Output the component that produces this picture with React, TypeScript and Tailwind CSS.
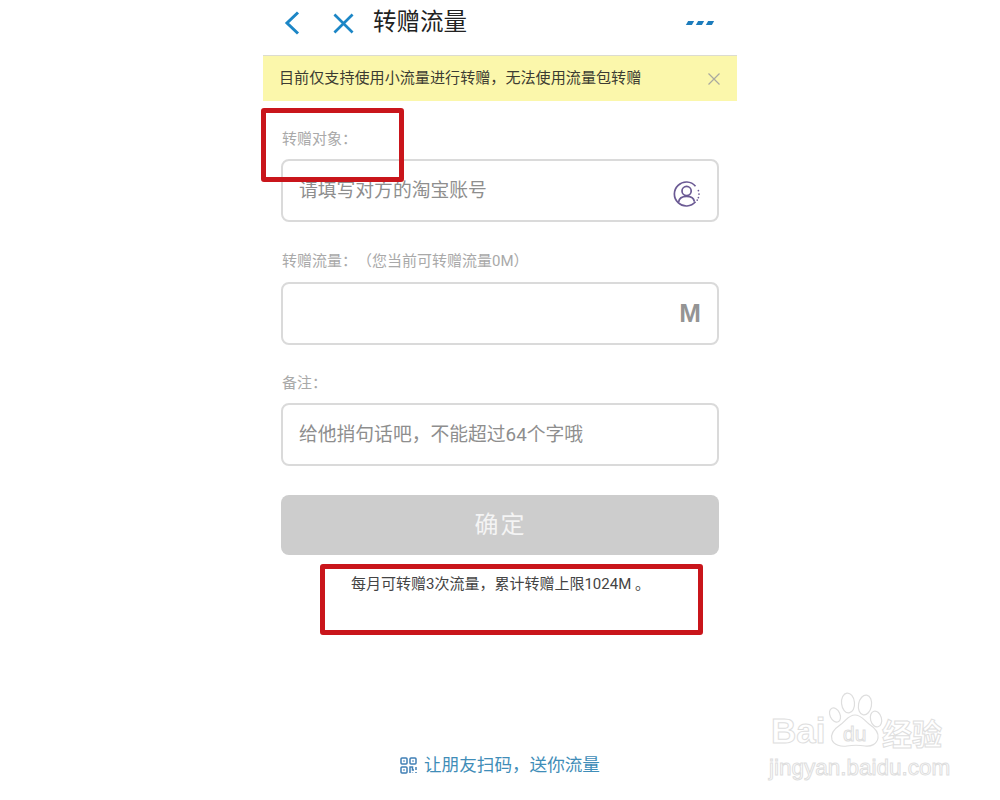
import React from 'react';

const FONT = "font-['Roboto','Noto_Sans_CJK_SC',sans-serif] [text-spacing-trim:space-all]";
const HOLLOW = 'text-transparent [-webkit-text-stroke:1px_#dedede]';

const Field: React.FC<{ label: string; children?: React.ReactNode; placeholder?: string; className?: string }> = ({
  label,
  children,
  placeholder,
  className,
}) => (
  <div className={className}>
    <div className="h-[22px] pl-px text-[15px] leading-[22px] text-[#a9a9a9]">{label}</div>
    <div className="mt-[9px] flex h-[63px] items-center justify-between rounded-[8px] border-2 border-[#dadada] pl-4 pr-4">
      <span className="pt-[2px] text-[18.8px] text-[#8e8e8e]">{placeholder}</span>
      {children}
    </div>
  </div>
);

const UserIcon = () => (
  <svg width="28" height="28" viewBox="0 0 28 28" fill="none" stroke="#6b5a94" strokeWidth="1.7" className="mt-[7px]">
    <path d="M22.5 6.2A12 12 0 1 0 22.5 21.8" />
    <path d="M25.4 10.5v.1M26 14v.1M25.4 17.5v.1M24.2 20v.1" strokeLinecap="round" />
    <circle cx="13.6" cy="11" r="4.6" />
    <path d="M5.6 22c.6-3.8 3.6-5.6 8-5.6s7.2 1.8 7.8 5.2" />
  </svg>
);

const QrIcon = () => (
  <svg width="17" height="17" viewBox="0 0 17 17" fill="none" stroke="#3f7fb5" strokeWidth="1.5">
    <rect x="1" y="1" width="6" height="6" rx="1" />
    <rect x="10" y="1" width="6" height="6" rx="1" />
    <rect x="1" y="10" width="6" height="6" rx="1" />
    <path d="M10 16v-6h2.5v3h1.5M16 10v3M12.5 16v-.5M16 16v-1" />
    <path d="M3 4h2M12 4h2M3 13h2" strokeWidth="1" />
  </svg>
);

const Watermark = () => (
  <div className="absolute left-[760px] top-[685px] h-[100px] w-[195px]">
    <svg width="56" height="58" viewBox="0 0 56 58" fill="none" stroke="#dedede" strokeWidth="1.2" className="absolute left-[68px] top-[6px]">
      <ellipse cx="20" cy="12" rx="6.5" ry="10" transform="rotate(-6 20 12)" />
      <ellipse cx="37" cy="14" rx="6.5" ry="10" transform="rotate(10 37 14)" />
      <ellipse cx="7" cy="24" rx="5" ry="7.5" transform="rotate(-25 7 24)" />
      <ellipse cx="48" cy="28" rx="5.5" ry="8" transform="rotate(-15 48 28)" />
      <path d="M27 24c6 0 9 5 14 9 6 4 10 8 9 14-1 6-7 9-13 8-6-1-12-1-18 0-6 1-13-1-15-6-2-6 2-11 8-15 6-4 8-10 15-10z" />
    </svg>
    <div className={`absolute left-[11px] top-[26px] font-['Liberation_Sans',sans-serif] text-[35px] leading-[40px] font-bold ${HOLLOW}`}>
      Bai
    </div>
    <div className={`absolute left-[83px] top-[37px] font-['Liberation_Sans',sans-serif] text-[21px] leading-[24px] ${HOLLOW}`}>
      du
    </div>
    <div className={`absolute left-[122px] top-[33px] text-[30px] leading-[34px] font-bold whitespace-nowrap ${HOLLOW}`}>经验</div>
    <div className={`absolute left-[9px] top-[70px] font-['Liberation_Sans',sans-serif] text-[22.5px] leading-[26px] whitespace-nowrap ${HOLLOW}`}>
      jingyan.baidu.com
    </div>
  </div>
);

export default function App() {
  return (
    <div className={`relative h-[800px] w-[1000px] overflow-hidden bg-white ${FONT}`}>
      <div className="mx-auto flex h-full w-[474px] flex-col">
        {/* Header */}
        <div className="flex h-[56px] shrink-0 items-center border-b border-[#dcdcd0] pb-[9px]">
          <svg width="16" height="24" viewBox="0 0 16 24" fill="none" stroke="#1c86c6" strokeWidth="3" className="ml-[21px]">
            <path d="M14 1.5 3 12l11 10.5" />
          </svg>
          <svg width="21" height="21" viewBox="0 0 22 22" fill="none" stroke="#1c86c6" strokeWidth="2.8" className="ml-[33px]">
            <path d="M1.5 1.5l19 19M20.5 1.5l-19 19" />
          </svg>
          <span className="ml-[19px] text-[23.5px] leading-none text-[#222]">转赠流量</span>
          <div className="ml-auto mr-[24px] flex gap-[4px]">
            <span className="h-[4px] w-[6px] -skew-x-[30deg] bg-[#1c7cbc]" />
            <span className="h-[4px] w-[6px] -skew-x-[30deg] bg-[#1c7cbc]" />
            <span className="h-[4px] w-[6px] -skew-x-[30deg] bg-[#1c7cbc]" />
          </div>
        </div>

        {/* Notice */}
        <div className="flex h-[45px] shrink-0 items-center justify-between bg-[#fbf7ab] pl-4 pr-[17px]">
          <span className="text-[15.1px] text-[#3c3c32]">目前仅支持使用小流量进行转赠，无法使用流量包转赠</span>
          <svg width="12" height="12" viewBox="0 0 12 12" fill="none" stroke="#a9a9a0" strokeWidth="1.2">
            <path d="M.5.5l11 11M11.5.5l-11 11" />
          </svg>
        </div>

        {/* Form */}
        <div className="flex flex-1 flex-col px-[18px]">
          <Field label="转赠对象：" placeholder="请填写对方的淘宝账号" className="mt-[27px]">
            <UserIcon />
          </Field>
          <Field label="转赠流量：（您当前可转赠流量0M）" className="mt-[28px] [&>div:last-child]:mt-[10px]">
            <span className="font-['Liberation_Sans',sans-serif] text-[26px] font-bold text-[#949494]">M</span>
          </Field>
          <Field label="备注：" placeholder="给他捎句话吧，不能超过64个字哦" className="mt-[27px]">
            <span />
          </Field>
          <button className="mt-[29px] h-[60px] rounded-[8px] bg-[#cdcdcd] pl-[1px] text-[24px] tracking-[2px] text-[#f4f4f4]">确定</button>
          <div className="mt-[19px] pl-[70px] text-[15px] leading-5 text-[#444]">每月可转赠3次流量，累计转赠上限1024M 。</div>
          <div className="mt-auto mb-[23px] flex items-center justify-center gap-[7px]">
            <QrIcon />
            <span className="text-[17.6px] leading-6 text-[#3f8db8]">让朋友扫码，送你流量</span>
          </div>
        </div>
      </div>

      {/* Red annotation boxes */}
      <div className="absolute left-[261px] top-[108px] h-[74px] w-[143px] rounded-[3px] border-[5px] border-[#c9151b]" />
      <div className="absolute left-[320px] top-[564px] h-[71px] w-[383px] rounded-[3px] border-[5px] border-[#c9151b]" />

      <Watermark />
    </div>
  );
}
